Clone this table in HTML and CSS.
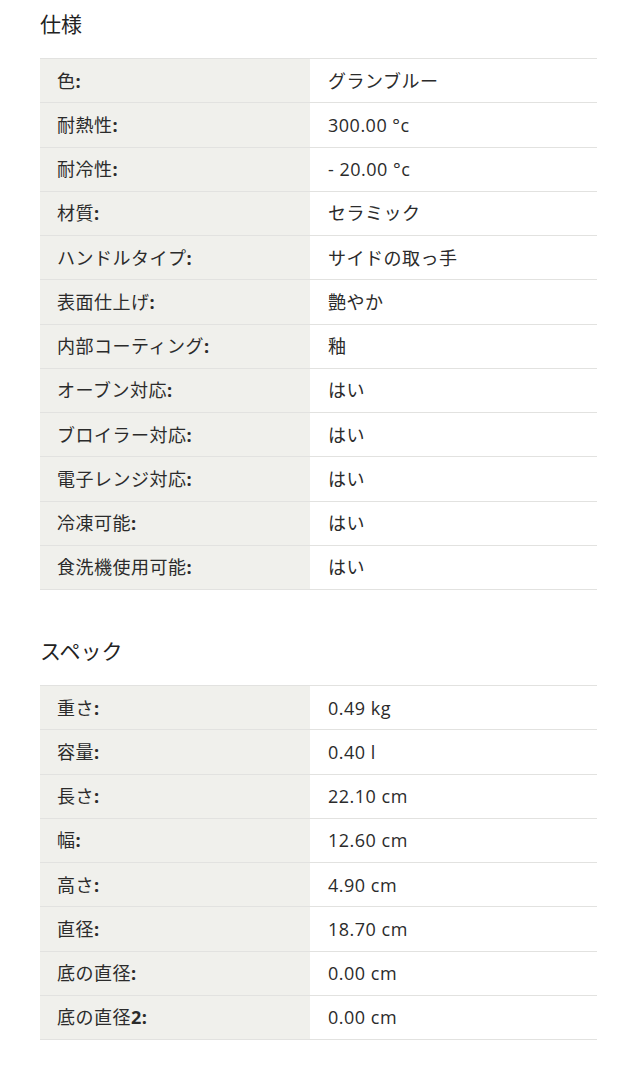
FILE: index.html
```html
<!DOCTYPE html>
<html lang="ja">
<head>
<meta charset="utf-8">
<link rel="stylesheet" href="styles.css">
</head>
<body>
<div class="page">
  <h2 class="heading first">仕様</h2>
  <table class="spec">
    <tr><th>色<b>:</b></th><td>グランブルー</td></tr>
    <tr><th>耐熱性<b>:</b></th><td>300.00 °c</td></tr>
    <tr><th>耐冷性<b>:</b></th><td>- 20.00 °c</td></tr>
    <tr><th>材質<b>:</b></th><td>セラミック</td></tr>
    <tr><th>ハンドルタイプ<b>:</b></th><td>サイドの取っ手</td></tr>
    <tr><th>表面仕上げ<b>:</b></th><td>艶やか</td></tr>
    <tr><th>内部コーティング<b>:</b></th><td>釉</td></tr>
    <tr><th>オーブン対応<b>:</b></th><td>はい</td></tr>
    <tr><th>ブロイラー対応<b>:</b></th><td>はい</td></tr>
    <tr><th>電子レンジ対応<b>:</b></th><td>はい</td></tr>
    <tr><th>冷凍可能<b>:</b></th><td>はい</td></tr>
    <tr><th>食洗機使用可能<b>:</b></th><td>はい</td></tr>
  </table>
  <h2 class="heading second">スペック</h2>
  <table class="spec">
    <tr><th>重さ<b>:</b></th><td>0.49 kg</td></tr>
    <tr><th>容量<b>:</b></th><td>0.40 l</td></tr>
    <tr><th>長さ<b>:</b></th><td>22.10 cm</td></tr>
    <tr><th>幅<b>:</b></th><td>12.60 cm</td></tr>
    <tr><th>高さ<b>:</b></th><td>4.90 cm</td></tr>
    <tr><th>直径<b>:</b></th><td>18.70 cm</td></tr>
    <tr><th>底の直径<b>:</b></th><td>0.00 cm</td></tr>
    <tr><th>底の直径<b>2:</b></th><td>0.00 cm</td></tr>
  </table>
</div>
</body>
</html>
```
FILE: styles.css
```css
html, body {
  margin: 0;
  padding: 0;
  background: #ffffff;
}
body {
  font-family: "Open Sans", "Noto Sans CJK JP", sans-serif;
  color: #2b2b2b;
}
.page {
  padding: 0 39px 0 40px;
}
.heading {
  font-family: "Noto Sans CJK JP", sans-serif;
  font-size: 21px;
  font-weight: 400;
  line-height: 30px;
  margin: 0;
  color: #222;
}
.heading.first {
  padding-top: 8px;
  margin-bottom: 20px;
}
.heading.second {
  margin-top: 45px;
  margin-bottom: 20px;
}
.spec {
  width: 100%;
  border-collapse: collapse;
  border-top: 1px solid #e2e2e0;
  font-size: 18px;
  letter-spacing: 0.5px;
}
.spec tr {
  border-bottom: 1px solid #e2e2e0;
}
.spec th,
.spec td {
  height: 43.25px;
  padding: 0 0 0 17px;
  text-align: left;
  vertical-align: middle;
  line-height: 24px;
}
.spec th {
  width: 253px;
  background: #f0f0ec;
  font-weight: 400;
  color: #2b2b2b;
}
.spec th b {
  font-weight: 700;
}
.spec td {
  padding-left: 18px;
  color: #2b2b2b;
}
```
